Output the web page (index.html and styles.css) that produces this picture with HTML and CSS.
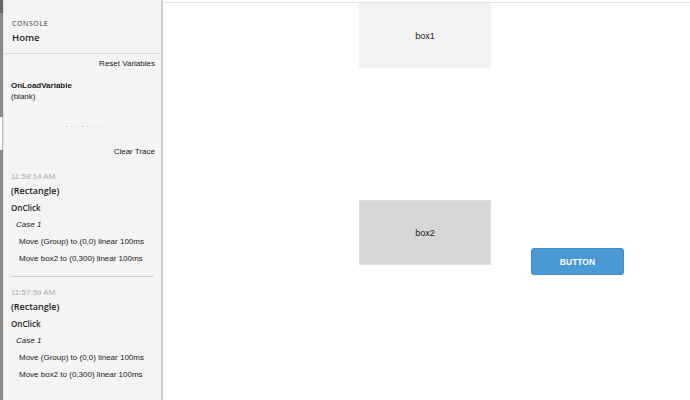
FILE: index.html
```html
<!DOCTYPE html>
<html lang="en">

<head>
    <meta charset="UTF-8">
    <title>Console</title>
    <link rel="stylesheet" href="styles.css">
</head>

<body>
    <div class="frame">
        <div class="edge">
            <div class="edge-dark"></div>
            <div class="edge-grey"></div>
            <div class="edge-light"></div>
            <div class="edge-grey fill"></div>
        </div>
        <div class="console">
            <div class="console-head">
                <div class="console-label">CONSOLE</div>
                <div class="console-page">Home</div>
            </div>
            <div class="action">Reset Variables</div>
            <div class="vars">
                <div class="var-name">OnLoadVariable</div>
                <div class="var-value">(blank)</div>
            </div>
            <div class="dots">· · · · · · ·</div>
            <div class="action clear">Clear Trace</div>

            <div class="trace">
                <div class="trace-time">11:58:14 AM</div>
                <div class="trace-widget">(Rectangle)</div>
                <div class="trace-event">OnClick</div>
                <div class="trace-case">Case 1</div>
                <div class="trace-step">Move (Group) to (0,0) linear 100ms</div>
                <div class="trace-step">Move box2 to (0,300) linear 100ms</div>
            </div>
            <div class="trace">
                <div class="trace-time">11:57:59 AM</div>
                <div class="trace-widget">(Rectangle)</div>
                <div class="trace-event">OnClick</div>
                <div class="trace-case">Case 1</div>
                <div class="trace-step">Move (Group) to (0,0) linear 100ms</div>
                <div class="trace-step">Move box2 to (0,300) linear 100ms</div>
            </div>
        </div>
        <div class="canvas">
            <div class="box box1">box1</div>
            <div class="box box2">box2</div>
            <div class="btn">BUTTON</div>
        </div>
    </div>
</body>

</html>
```

FILE: styles.css
```css
body {
    margin: 0;
    font-family: 'Liberation Sans', Arial, sans-serif;
    font-size: 8px;
    color: #222;
    background: #fff;
}

.frame {
    display: flex;
    height: 400px;
    overflow: hidden;
}

.edge {
    width: 3px;
    display: flex;
    flex-direction: column;
    border-right: 1px solid #e2e2e2;
}

.edge-dark {
    height: 13px;
    background: #666;
}

.edge-grey {
    height: 104px;
    background: #8a8a8a;
}

.edge-light {
    height: 33px;
    background: #fff;
    border-right: 1px solid #bbb;
}

.edge-grey.fill {
    flex: 1;
}

.console {
    width: 157px;
    background: #f4f4f4;
    border-right: 2px solid #cfcfcf;
    flex-shrink: 0;
    white-space: nowrap;
}

.console-head {
    padding: 19px 8px 8px;
    border-bottom: 1px solid #dcdcdc;
}

.console-label {
    font-family: 'Open Sans', sans-serif;
    font-size: 7px;
    letter-spacing: 0.6px;
    line-height: 10px;
    color: #333;
}

.console-page {
    font-family: 'Open Sans', sans-serif;
    font-size: 9.5px;
    font-weight: 600;
    line-height: 14px;
    margin-top: 2px;
}

.action {
    text-align: right;
    padding: 0 6px;
    line-height: 12px;
    margin-top: 4px;
}

.vars {
    padding: 0 7px;
    margin-top: 10px;
    line-height: 11px;
}

.var-name {
    font-weight: bold;
}

.dots {
    text-align: center;
    color: #999;
    font-size: 7px;
    margin-top: 19px;
    line-height: 12px;
    letter-spacing: 0.5px;
}

.action.clear {
    margin-top: 13px;
}

.trace {
    margin: 13px 7px 0;
    padding-bottom: 9px;
}

.trace + .trace {
    border-top: 1px solid #d0d0d0;
    padding-top: 10px;
    margin-top: 0;
}

.trace-time {
    color: #aaa;
    line-height: 11px;
}

.trace-widget {
    font-family: 'Open Sans', sans-serif;
    font-weight: 600;
    font-size: 9px;
    line-height: 17px;
}

.trace-event {
    font-family: 'Open Sans', sans-serif;
    font-weight: 600;
    font-size: 8px;
    line-height: 17px;
}

.trace-case {
    font-style: italic;
    padding-left: 5px;
    line-height: 17px;
}

.trace-step {
    padding-left: 8px;
    line-height: 17px;
}

.canvas {
    flex: 1;
    position: relative;
    border-top: 1px solid #e4e4e4;
    margin-top: 2px;
}

.box {
    position: absolute;
    left: 196px;
    width: 132px;
    display: flex;
    align-items: center;
    justify-content: center;
    font-size: 9px;
}

.box1 {
    top: 0;
    height: 65px;
    background: #f2f2f2;
}

.box2 {
    top: 197px;
    height: 65px;
    background: #d7d7d7;
    border: 1px solid #dedede;
    box-sizing: border-box;
}

.btn {
    position: absolute;
    left: 368px;
    top: 245px;
    width: 93px;
    height: 27px;
    box-sizing: border-box;
    background: #4b99d4;
    border: 1px solid #3d8bc8;
    border-radius: 3px;
    color: #fff;
    font-weight: bold;
    font-size: 8.5px;
    display: flex;
    align-items: center;
    justify-content: center;
}
```
